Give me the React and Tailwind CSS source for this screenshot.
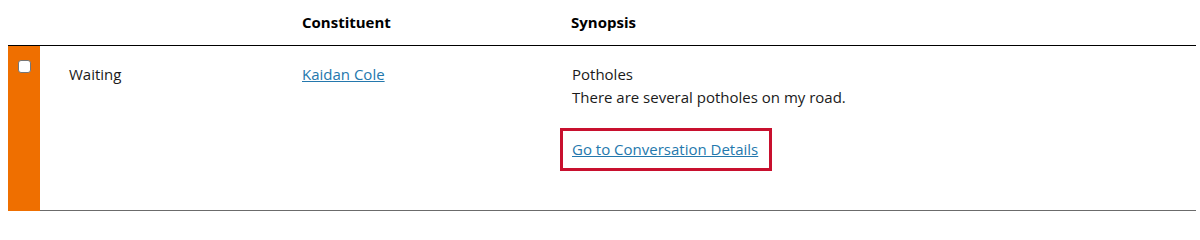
import React from "react";

const font = { fontFamily: '"Open Sans", "Noto Sans", sans-serif' };

const App = () => {
    return (
        <div className="w-[1200px] h-[211px] bg-white text-[15px] text-[#1a1a1a] pl-2 pr-1" style={font}>
            <div className="flex h-[46px] items-center border-b border-black">
                <div className="w-[294px]"></div>
                <div className="w-[269px] font-bold text-black">Constituent</div>
                <div className="font-bold text-black">Synopsis</div>
            </div>
            <div className="flex h-[165px]">
                <div className="w-8 bg-[#ef6f00] flex justify-center pt-[14px]">
                    <input type="checkbox" className="w-[13px] h-[13px] appearance-none bg-white border border-[#767676] rounded-[3px]" />
                </div>
                <div className="flex flex-1 border-b border-[#6b6b6b]">
                    <div className="w-[262px] pl-[29px] pt-[17px]">Waiting</div>
                    <div className="w-[258px] pt-[17px]">
                        <a href="#" className="text-[#2478ad] underline">Kaidan Cole</a>
                    </div>
                    <div className="pt-[17px] pl-3 flex flex-col">
                        <span>Potholes</span>
                        <span>There are several potholes on my road.</span>
                        <div className="mt-[20px] -ml-3 w-[212px] h-[43px] border-[3px] border-[#c8102e] flex items-center pl-[9px]">
                            <a href="#" className="text-[#2478ad] underline">Go to Conversation Details</a>
                        </div>
                    </div>
                </div>
            </div>
        </div>
    );
};

export default App;
